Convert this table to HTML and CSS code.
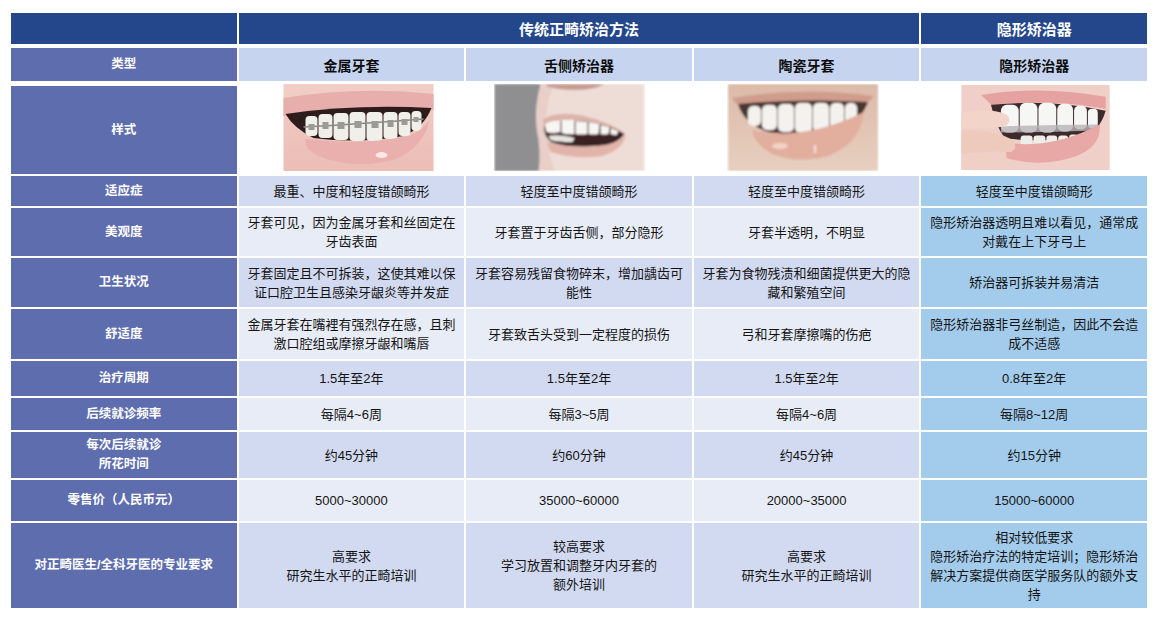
FILE: index.html
```html
<!DOCTYPE html>
<html lang="zh-CN">
<head>
<meta charset="utf-8">
<title>正畸矫治方法对比</title>
<link rel="stylesheet" href="styles.css">
</head>
<body>
<div class="table">
  <div class="row r-head">
    <div class="cell head"></div>
    <div class="cell head span3">传统正畸矫治方法</div>
    <div class="cell head">隐形矫治器</div>
  </div>
  <div class="row r-type">
    <div class="cell label">类型</div>
    <div class="cell type">金属牙套</div>
    <div class="cell type">舌侧矫治器</div>
    <div class="cell type">陶瓷牙套</div>
    <div class="cell type">隐形矫治器</div>
  </div>
  <div class="row r-img">
    <div class="cell label">样式</div>
    <div class="cell pic pic1">
      <svg width="151" height="87" viewBox="0 0 150 87">
        <defs>
          <filter id="soft1"><feGaussianBlur stdDeviation="0.7"/></filter>
          <linearGradient id="sk1" x1="0" y1="0" x2="0" y2="1">
            <stop offset="0" stop-color="#F1CEC6"/>
            <stop offset="1" stop-color="#EBBDB6"/>
          </linearGradient>
        </defs>
        <g filter="url(#soft1)">
          <rect width="150" height="87" fill="url(#sk1)"/>
          <path d="M0 14 Q75 2 150 10 L150 26 Q75 22 0 32 Z" fill="#E7AEAC"/>
          <path d="M2 30 Q70 20 148 24 Q140 44 120 52 Q75 60 30 54 Q10 44 2 30 Z" fill="#2E1E1E"/>
          <g fill="#F1EFEA">
            <rect x="22" y="32" width="12" height="20" rx="4"/>
            <rect x="35" y="30" width="14" height="24" rx="4"/>
            <rect x="50" y="29" width="15" height="27" rx="4"/>
            <rect x="66" y="28" width="16" height="29" rx="4"/>
            <rect x="83" y="28" width="16" height="29" rx="4"/>
            <rect x="100" y="28" width="14" height="27" rx="4"/>
            <rect x="115" y="28" width="12" height="24" rx="4"/>
            <rect x="128" y="27" width="10" height="20" rx="4"/>
          </g>
          <path d="M20 43 Q75 40 140 35" stroke="#8C8A86" stroke-width="1.6" fill="none"/>
          <g fill="#9C9A95">
            <rect x="25" y="40" width="6" height="6"/>
            <rect x="39" y="38" width="6" height="7"/>
            <rect x="54" y="38" width="7" height="7"/>
            <rect x="71" y="37" width="7" height="7"/>
            <rect x="88" y="37" width="7" height="7"/>
            <rect x="104" y="36" width="6" height="7"/>
            <rect x="118" y="35" width="6" height="6"/>
            <rect x="130" y="33" width="5" height="5"/>
          </g>
          <path d="M22 55 Q75 62 125 52 Q140 46 146 36 Q140 64 110 76 Q70 86 35 72 Q20 64 22 55 Z" fill="#EAB0AE"/>
          <ellipse cx="98" cy="71" rx="6" ry="3" fill="#FBE8E6"/>
        </g>
      </svg>
    </div>
    <div class="cell pic pic2">
      <svg width="151" height="87" viewBox="0 0 150 87">
        <defs>
          <filter id="soft2"><feGaussianBlur stdDeviation="0.8"/></filter>
        </defs>
        <g filter="url(#soft2)">
          <rect width="150" height="87" fill="#EEDDD6"/>
          <rect width="46" height="87" fill="#8F8F91"/>
          <path d="M46 0 Q38 30 44 55 Q46 75 44 87 L60 87 Q50 60 52 30 Q54 10 60 0 Z" fill="#E8CFC7"/>
          <path d="M52 0 L110 0 Q100 6 80 6 Q62 6 52 2 Z" fill="#C99C93"/>
          <path d="M48 36 Q60 26 90 32 Q115 38 132 50 Q110 40 90 38 Q65 34 50 42 Z" fill="#DDB4AA"/>
          <path d="M50 40 Q70 34 95 38 Q118 42 130 50 Q122 62 100 62 Q72 64 56 58 Q48 50 50 40 Z" fill="#3A2422"/>
          <g fill="#F8F6F3">
            <path d="M50 40 Q58 36 66 37 L66 48 Q58 50 52 48 Z"/>
            <path d="M67 36 L80 36 L80 50 Q72 51 67 49 Z"/>
            <path d="M81 37 L93 38 L93 50 Q86 51 81 50 Z"/>
            <path d="M94 38 L105 40 L104 50 Q98 51 94 50 Z"/>
            <path d="M106 41 L115 43 L114 50 Q109 51 106 50 Z"/>
            <path d="M116 44 L124 47 L122 51 Q118 51 116 50 Z"/>
          </g>
          <path d="M54 52 Q64 50 80 54 L78 58 Q64 58 56 56 Z" fill="#E9E6E2"/>
          <path d="M52 58 Q80 66 112 61 Q126 58 132 50 Q128 66 108 72 Q80 76 56 68 Z" fill="#E2B3A9"/>
        </g>
      </svg>
    </div>
    <div class="cell pic pic3">
      <svg width="152" height="87" viewBox="0 0 150 87">
        <defs>
          <filter id="soft3"><feGaussianBlur stdDeviation="0.8"/></filter>
          <linearGradient id="sk3" x1="0" y1="0" x2="0" y2="1">
            <stop offset="0" stop-color="#DCBBA8"/>
            <stop offset="1" stop-color="#E7CFC0"/>
          </linearGradient>
        </defs>
        <g filter="url(#soft3)">
          <rect width="150" height="87" fill="url(#sk3)"/>
          <path d="M4 14 Q75 2 146 12 Q140 20 130 22 Q75 16 18 24 Q8 22 4 14 Z" fill="#D09C8C"/>
          <path d="M10 20 Q75 14 140 18 Q132 40 108 48 Q75 54 40 48 Q16 40 10 20 Z" fill="#4A3530"/>
          <g fill="#F4F2EE">
            <rect x="20" y="22" width="13" height="20" rx="5"/>
            <rect x="34" y="21" width="15" height="25" rx="5"/>
            <rect x="50" y="20" width="16" height="28" rx="5"/>
            <rect x="67" y="19" width="17" height="30" rx="5"/>
            <rect x="85" y="19" width="16" height="29" rx="5"/>
            <rect x="102" y="19" width="14" height="26" rx="5"/>
            <rect x="117" y="19" width="12" height="22" rx="5"/>
          </g>
          <path d="M24 46 Q75 58 136 28 Q132 60 100 72 Q70 80 44 70 Q26 60 24 46 Z" fill="#E2AE9E"/>
          <ellipse cx="52" cy="62" rx="8" ry="3" fill="#F3D3C8"/>
          <rect x="86" y="61" width="2" height="8" fill="#F6E2DA"/>
        </g>
      </svg>
    </div>
    <div class="cell pic pic4">
      <svg width="149" height="85" viewBox="0 0 150 86">
        <defs>
          <filter id="soft4"><feGaussianBlur stdDeviation="0.8"/></filter>
        </defs>
        <g filter="url(#soft4)">
          <rect width="150" height="86" fill="#F0CFC8"/>
          <path d="M20 10 Q80 0 146 12 L146 24 Q90 14 30 20 Z" fill="#E5A2A1"/>
          <path d="M30 20 Q90 14 146 26 Q140 46 124 54 Q80 58 44 54 Q34 40 30 20 Z" fill="#3C2A2A"/>
          <g fill="#F6F6F4">
            <rect x="40" y="20" width="18" height="28" rx="6"/>
            <rect x="59" y="18" width="18" height="30" rx="6"/>
            <rect x="78" y="18" width="18" height="30" rx="6"/>
            <rect x="97" y="19" width="16" height="28" rx="6"/>
            <rect x="114" y="21" width="13" height="24" rx="5"/>
            <rect x="128" y="24" width="10" height="20" rx="4"/>
          </g>
          <path d="M40 42 Q90 40 138 40 L138 46 Q90 48 40 48 Z" fill="#B8B3B6" opacity="0.8"/>
          <g fill="#EFEDEA">
            <rect x="60" y="51" width="12" height="14" rx="3"/>
            <rect x="73" y="51" width="12" height="14" rx="3"/>
            <rect x="86" y="51" width="11" height="13" rx="3"/>
            <rect x="98" y="51" width="10" height="12" rx="3"/>
            <rect x="109" y="50" width="9" height="10" rx="3"/>
          </g>
          <path d="M44 58 Q90 66 140 40 Q142 62 116 72 Q80 84 46 74 Z" fill="#E7A8A6"/>
          <path d="M0 28 Q30 22 46 30 Q52 36 44 42 Q30 44 0 44 Z" fill="#F2D4C8"/>
          <path d="M0 46 Q34 44 52 56 Q58 64 50 68 Q34 66 0 70 Z" fill="#EECABC"/>
          <path d="M0 72 Q30 70 40 80 L40 86 L0 86 Z" fill="#F0CFC4"/>
        </g>
      </svg>
    </div>
  </div>
  <div class="row r-a dark">
    <div class="cell label">适应症</div>
    <div class="cell data">最重、中度和轻度错颌畸形</div>
    <div class="cell data">轻度至中度错颌畸形</div>
    <div class="cell data">轻度至中度错颌畸形</div>
    <div class="cell data last">轻度至中度错颌畸形</div>
  </div>
  <div class="row r-b light">
    <div class="cell label">美观度</div>
    <div class="cell data">牙套可见，因为金属牙套和丝固定在<br>牙齿表面</div>
    <div class="cell data">牙套置于牙齿舌侧，部分隐形</div>
    <div class="cell data">牙套半透明，不明显</div>
    <div class="cell data last">隐形矫治器透明且难以看见，通常成<br>对戴在上下牙弓上</div>
  </div>
  <div class="row r-c dark">
    <div class="cell label">卫生状况</div>
    <div class="cell data">牙套固定且不可拆装，这使其难以保<br>证口腔卫生且感染牙龈炎等并发症</div>
    <div class="cell data">牙套容易残留食物碎末，增加龋齿可<br>能性</div>
    <div class="cell data">牙套为食物残渍和细菌提供更大的隐<br>藏和繁殖空间</div>
    <div class="cell data last">矫治器可拆装并易清洁</div>
  </div>
  <div class="row r-d light">
    <div class="cell label">舒适度</div>
    <div class="cell data">金属牙套在嘴裡有强烈存在感，且刺<br>激口腔组或摩擦牙龈和嘴唇</div>
    <div class="cell data">牙套致舌头受到一定程度的损伤</div>
    <div class="cell data">弓和牙套摩擦嘴的伤疤</div>
    <div class="cell data last">隐形矫治器非弓丝制造，因此不会造<br>成不适感</div>
  </div>
  <div class="row r-e dark">
    <div class="cell label">治疗周期</div>
    <div class="cell data">1.5年至2年</div>
    <div class="cell data">1.5年至2年</div>
    <div class="cell data">1.5年至2年</div>
    <div class="cell data last">0.8年至2年</div>
  </div>
  <div class="row r-f light">
    <div class="cell label">后续就诊频率</div>
    <div class="cell data">每隔4~6周</div>
    <div class="cell data">每隔3~5周</div>
    <div class="cell data">每隔4~6周</div>
    <div class="cell data last">每隔8~12周</div>
  </div>
  <div class="row r-g dark">
    <div class="cell label">每次后续就诊<br>所花时间</div>
    <div class="cell data">约45分钟</div>
    <div class="cell data">约60分钟</div>
    <div class="cell data">约45分钟</div>
    <div class="cell data last">约15分钟</div>
  </div>
  <div class="row r-h light">
    <div class="cell label">零售价（人民币元）</div>
    <div class="cell data">5000~30000</div>
    <div class="cell data">35000~60000</div>
    <div class="cell data">20000~35000</div>
    <div class="cell data last">15000~60000</div>
  </div>
  <div class="row r-i dark">
    <div class="cell label">对正畸医生/全科牙医的专业要求</div>
    <div class="cell data">高要求<br>研究生水平的正畸培训</div>
    <div class="cell data">较高要求<br>学习放置和调整牙内牙套的<br>额外培训</div>
    <div class="cell data">高要求<br>研究生水平的正畸培训</div>
    <div class="cell data last">相对较低要求<br>隐形矫治疗法的特定培训；隐形矫治<br>解决方案提供商医学服务队的额外支<br>持</div>
  </div>
</div>
</body>
</html>
```

FILE: styles.css
```css
html, body {
  margin: 0;
  padding: 0;
  background: #ffffff;
}

body {
  font-family: "Liberation Sans", "Noto Sans CJK SC", sans-serif;
  color: #141414;
}

.table {
  display: flex;
  flex-direction: column;
  gap: 2px;
  width: 1136px;
  margin: 13px 0 0 11px;
}

.row {
  display: grid;
  grid-template-columns: repeat(5, minmax(0, 1fr));
  grid-template-rows: minmax(0, 1fr);
  column-gap: 2px;
}

.cell {
  display: flex;
  align-items: center;
  justify-content: center;
  text-align: center;
  min-width: 0;
  min-height: 0;
}

.span3 {
  grid-column: span 3;
}

.head {
  background: #24468B;
  color: #ffffff;
  font-weight: 700;
  font-size: 15px;
}

.label {
  background: #5E6DAD;
  color: #ffffff;
  font-weight: 700;
  font-size: 12.5px;
  line-height: 19px;
}

.type {
  background: #C6D4EF;
  color: #0c0c0c;
  font-weight: 700;
  font-size: 14px;
}

.data {
  font-size: 13px;
  line-height: 19px;
  white-space: nowrap;
}

.dark .data {
  background: #D2DAF1;
}

.light .data {
  background: #E8ECF7;
}

.dark .data.last,
.light .data.last {
  background: #A3CCEC;
}

.pic {
  background: #ffffff;
}

.pic svg {
  display: block;
  flex: none;
  margin-top: -5px;
}

.pic1 svg { margin-left: 14px; }
.pic2 svg { margin-right: 18px; }
.pic3 svg { margin-right: 7px; }
.pic4 svg { margin-left: 2px; }

.r-head { height: 31px; margin-bottom: 2px; }
.r-type { height: 33px; margin-bottom: 3px; }
.r-img  { height: 88px; }
.r-a { height: 30px; }
.r-b { height: 48px; }
.r-c { height: 49px; }
.r-d { height: 50px; }
.r-e { height: 35px; }
.r-f { height: 32px; }
.r-g { height: 46px; }
.r-h { height: 41px; }
.r-i { height: 85px; }
```
